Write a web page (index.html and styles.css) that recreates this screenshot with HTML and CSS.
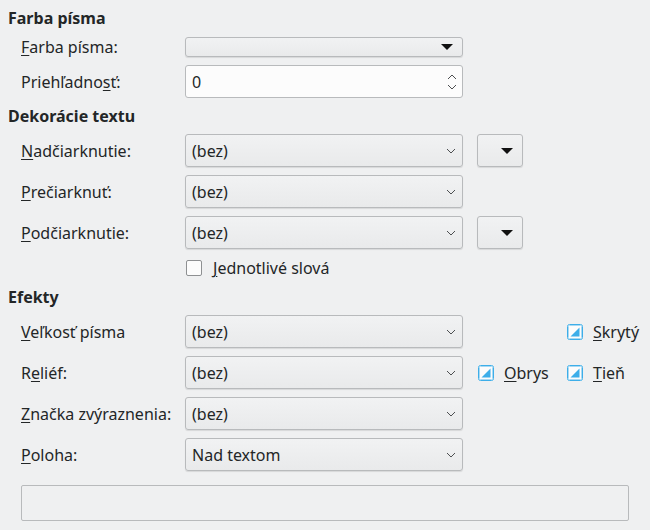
FILE: index.html
```html
<!DOCTYPE html>
<html lang="sk">
<head>
<meta charset="utf-8">
<link rel="stylesheet" href="styles.css">
</head>
<body>
<div class="page">
  <div class="title title-first">Farba písma</div>
  <div class="row row-short">
    <div class="label"><u>F</u>arba písma:</div>
    <div class="combo combo-color"><span class="tri"></span></div>
  </div>
  <div class="row">
    <div class="label">Priehľadno<u>s</u>ť:</div>
    <div class="spin">
      <span class="spin-text">0</span>
      <svg class="spin-arrows" width="12" height="24" viewBox="0 0 12 24"><path d="M2 9 L6 5 L10 9 M2 15 L6 19 L10 15" fill="none" stroke="#4d4f51" stroke-width="1"/></svg>
    </div>
  </div>

  <div class="title">Dekorácie textu</div>
  <div class="row">
    <div class="label"><u>N</u>adčiarknutie:</div>
    <div class="combo"><span class="combo-text">(bez)</span><svg class="chev" width="10" height="6" viewBox="0 0 10 6"><path d="M1 1 L5 5 L9 1" fill="none" stroke="#4d4f51" stroke-width="1"/></svg></div>
    <div class="tool"><span class="tri tri-big"></span></div>
  </div>
  <div class="row">
    <div class="label"><u>P</u>rečiarknuť:</div>
    <div class="combo"><span class="combo-text">(bez)</span><svg class="chev" width="10" height="6" viewBox="0 0 10 6"><path d="M1 1 L5 5 L9 1" fill="none" stroke="#4d4f51" stroke-width="1"/></svg></div>
  </div>
  <div class="row">
    <div class="label"><u>P</u>odčiarknutie:</div>
    <div class="combo"><span class="combo-text">(bez)</span><svg class="chev" width="10" height="6" viewBox="0 0 10 6"><path d="M1 1 L5 5 L9 1" fill="none" stroke="#4d4f51" stroke-width="1"/></svg></div>
    <div class="tool"><span class="tri tri-big"></span></div>
  </div>
  <div class="row row-check">
    <div class="label"></div>
    <span class="check"></span><span class="check-label"><u>J</u>ednotlivé slová</span>
  </div>

  <div class="title title-efekty">Efekty</div>
  <div class="row">
    <div class="label"><u>V</u>eľkosť písma</div>
    <div class="combo"><span class="combo-text">(bez)</span><svg class="chev" width="10" height="6" viewBox="0 0 10 6"><path d="M1 1 L5 5 L9 1" fill="none" stroke="#4d4f51" stroke-width="1"/></svg></div>
    <div class="extras">
      <span class="opt opt-empty"></span>
      <span class="opt">
        <svg class="tcheck" width="16" height="16" viewBox="0 0 16 16"><rect x="0.5" y="0.5" width="15" height="15" rx="2" fill="#fcfcfc" stroke="#3daee9"/><rect x="1.5" y="1.5" width="13" height="13" rx="1" fill="none" stroke="#a8d9f3"/><path d="M3.5 12.5 L12.5 12.5 L12.5 3.5 Z" fill="#3daee9"/></svg>
        <span class="opt-label"><u>S</u>krytý</span>
      </span>
    </div>
  </div>
  <div class="row">
    <div class="label">R<u>e</u>liéf:</div>
    <div class="combo"><span class="combo-text">(bez)</span><svg class="chev" width="10" height="6" viewBox="0 0 10 6"><path d="M1 1 L5 5 L9 1" fill="none" stroke="#4d4f51" stroke-width="1"/></svg></div>
    <div class="extras">
      <span class="opt">
        <svg class="tcheck" width="16" height="16" viewBox="0 0 16 16"><rect x="0.5" y="0.5" width="15" height="15" rx="2" fill="#fcfcfc" stroke="#3daee9"/><rect x="1.5" y="1.5" width="13" height="13" rx="1" fill="none" stroke="#a8d9f3"/><path d="M3.5 12.5 L12.5 12.5 L12.5 3.5 Z" fill="#3daee9"/></svg>
        <span class="opt-label"><u>O</u>brys</span>
      </span>
      <span class="opt">
        <svg class="tcheck" width="16" height="16" viewBox="0 0 16 16"><rect x="0.5" y="0.5" width="15" height="15" rx="2" fill="#fcfcfc" stroke="#3daee9"/><rect x="1.5" y="1.5" width="13" height="13" rx="1" fill="none" stroke="#a8d9f3"/><path d="M3.5 12.5 L12.5 12.5 L12.5 3.5 Z" fill="#3daee9"/></svg>
        <span class="opt-label"><u>T</u>ieň</span>
      </span>
    </div>
  </div>
  <div class="row">
    <div class="label"><u>Z</u>načka zvýraznenia:</div>
    <div class="combo"><span class="combo-text">(bez)</span><svg class="chev" width="10" height="6" viewBox="0 0 10 6"><path d="M1 1 L5 5 L9 1" fill="none" stroke="#4d4f51" stroke-width="1"/></svg></div>
  </div>
  <div class="row">
    <div class="label"><u>P</u>oloha:</div>
    <div class="combo"><span class="combo-text">Nad textom</span><svg class="chev" width="10" height="6" viewBox="0 0 10 6"><path d="M1 1 L5 5 L9 1" fill="none" stroke="#4d4f51" stroke-width="1"/></svg></div>
  </div>

  <div class="preview"></div>
</div>
</body>
</html>
```

FILE: styles.css
```css
html, body {
  margin: 0;
  padding: 0;
  background: #eff0f1;
}
body {
  width: 650px;
  height: 530px;
  overflow: hidden;
  font-family: "Noto Sans", "DejaVu Sans", sans-serif;
  font-size: 16px;
  color: #232627;
}
u {
  text-decoration: underline;
  text-underline-offset: 2px;
  text-decoration-thickness: 1px;
}
.page {
  padding: 8px 0 0 8px;
}
.title {
  font-weight: bold;
  height: 20px;
  line-height: 20px;
  margin-bottom: 8px;
}
.title-first {
  margin-bottom: 9px;
}
.title-efekty {
  margin-top: 11px;
}
.row {
  display: flex;
  align-items: center;
  height: 33px;
  margin-bottom: 8px;
}
.row-short {
  height: 20px;
}
.label {
  width: 177px;
  padding-left: 13px;
  box-sizing: border-box;
  flex: none;
  white-space: nowrap;
}
.combo, .spin {
  width: 278px;
  height: 100%;
  box-sizing: border-box;
  border: 1px solid #b8babc;
  border-radius: 3px;
  background: linear-gradient(#f1f2f3, #e9eaeb);
  box-shadow: 0 1px 1px rgba(0,0,0,0.10);
  display: flex;
  align-items: center;
  padding: 0 6px 0 6px;
  flex: none;
}
.combo-text, .spin-text {
  flex: 1;
}
.combo-color {
  justify-content: flex-end;
  padding-right: 9px;
}
.tri {
  width: 0;
  height: 0;
  border-left: 6px solid transparent;
  border-right: 6px solid transparent;
  border-top: 6px solid #111;
}
.spin {
  background: #fcfcfc;
  box-shadow: none;
  padding-right: 4px;
}
.tool {
  width: 46px;
  height: 100%;
  box-sizing: border-box;
  margin-left: 14px;
  border: 1px solid #b8babc;
  border-radius: 3px;
  background: linear-gradient(#f1f2f3, #e9eaeb);
  box-shadow: 0 1px 1px rgba(0,0,0,0.10);
  display: flex;
  align-items: center;
  justify-content: flex-end;
  padding-right: 9px;
}
.tri-big {
  border-left-width: 6.5px;
  border-right-width: 6.5px;
  border-top-width: 6px;
}
.row-check {
  height: 16px;
  margin-top: 11px;
}
.check {
  width: 16px;
  height: 16px;
  box-sizing: border-box;
  border: 1px solid #8e9092;
  border-radius: 2px;
  background: #fcfcfc;
  margin-left: 1px;
  flex: none;
}
.check-label {
  margin-left: 11px;
}
.extras {
  display: flex;
  align-items: center;
  margin-left: 15px;
}
.opt {
  display: flex;
  align-items: center;
  width: 89px;
}
.opt-empty {
  height: 16px;
}
.tcheck {
  flex: none;
}
.opt-label {
  margin-left: 10px;
}
.preview {
  margin: 14px 0 0 13px;
  width: 608px;
  height: 36px;
  box-sizing: border-box;
  border: 1px solid #b8babc;
  border-radius: 2px;
}
```
